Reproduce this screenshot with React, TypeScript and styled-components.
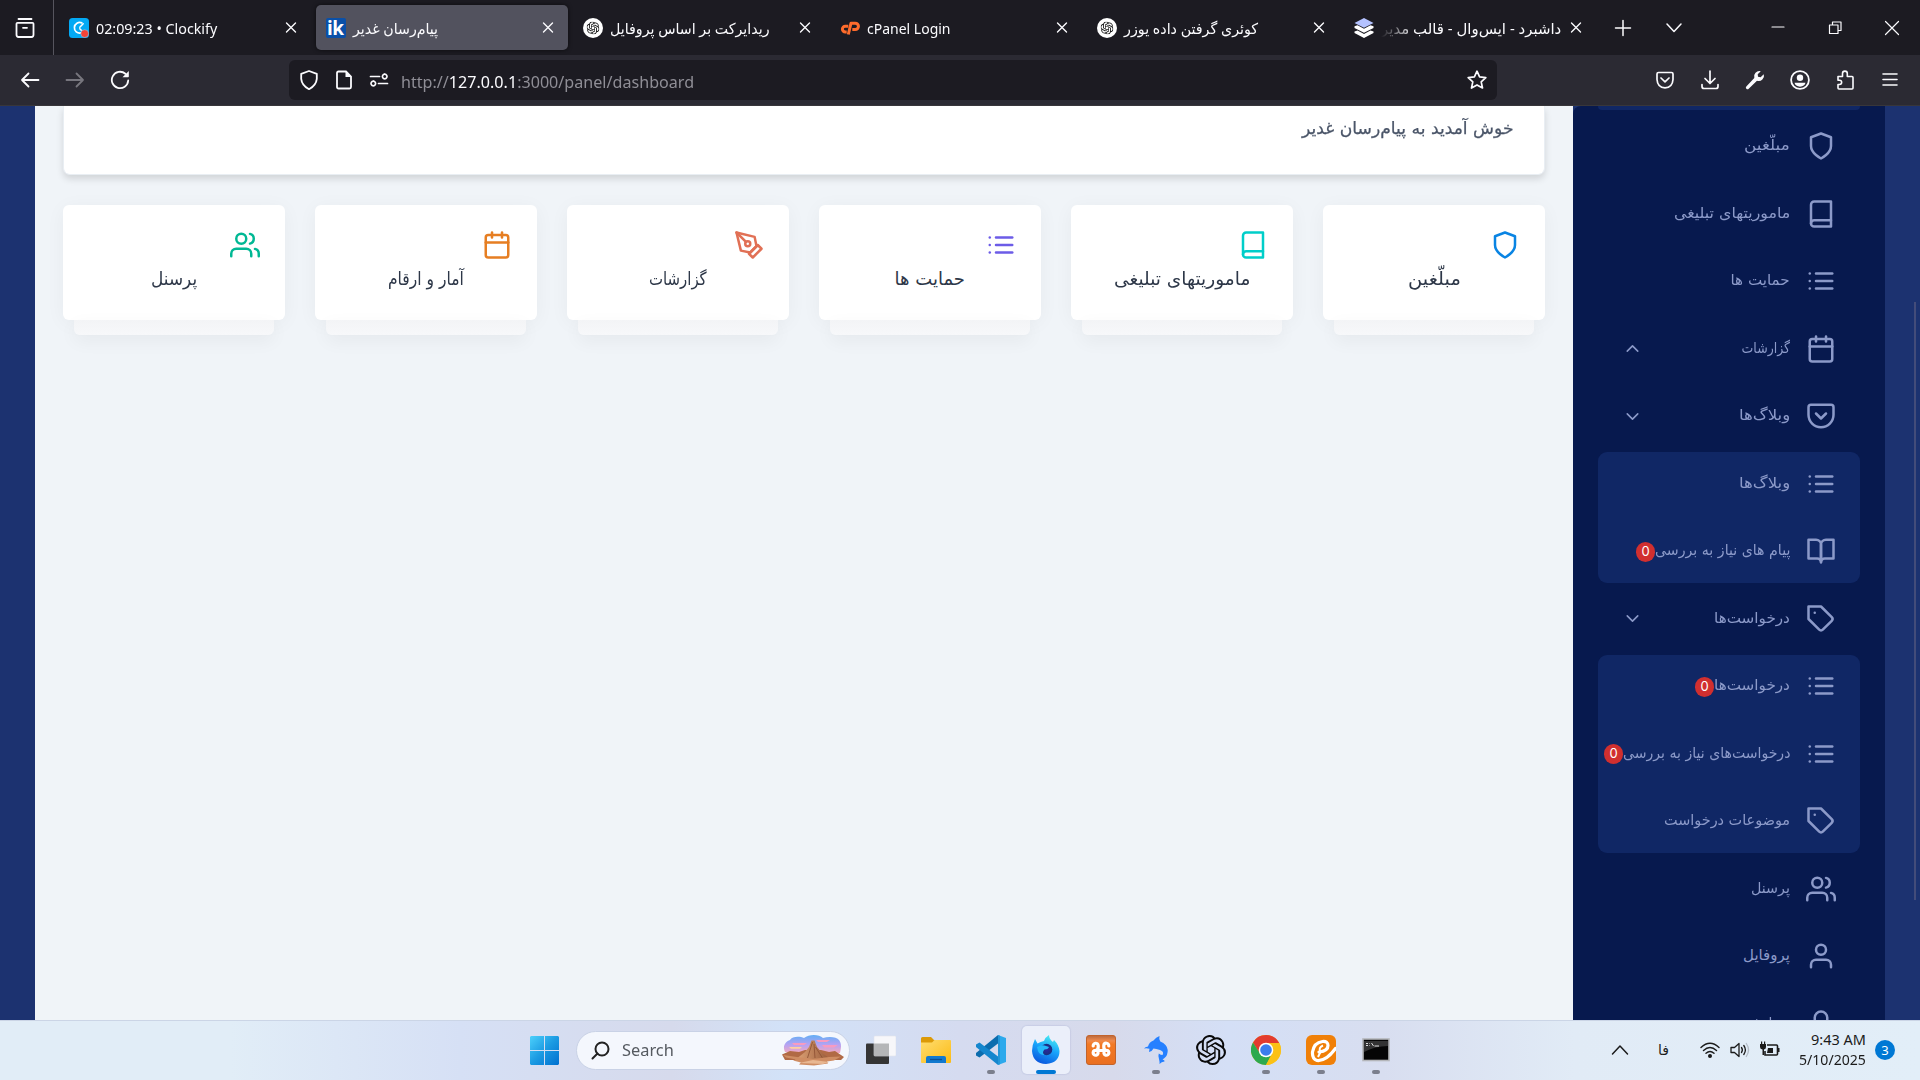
import React, { useLayoutEffect, useRef, useState } from "react";
import styled, { createGlobalStyle, css } from "styled-components";
import {
  FiBook, FiBookOpen, FiCalendar, FiChevronDown, FiChevronUp, FiList, FiLock,
  FiPenTool, FiPocket, FiShield, FiTag, FiUser, FiUsers,
} from "react-icons/fi";
import { SiOpenai } from "react-icons/si";
import type { IconType } from "react-icons";

const Global = createGlobalStyle`
  * { box-sizing: border-box; }
  body { margin: 0; overflow: hidden; background: #1c3270; }
  svg { display: block; flex: none; }
`;

const ui = `"Noto Sans", "Open Sans", "DejaVu Sans", sans-serif`;
const fa = `"DejaVu Sans", sans-serif`;

/* ---------- text held to a column width ---------- */

const FitBox = styled.span<{ $w: number; $rtl?: boolean; $dy?: number }>`
  display: block;
  flex: none;
  width: ${(p) => p.$w}px;
  direction: ${(p) => (p.$rtl ? "rtl" : "ltr")};
  white-space: nowrap;
  margin-top: ${(p) => p.$dy ?? 0}px;
`;
const FitInner = styled.span<{ $rtl?: boolean }>`
  display: inline-block;
  transform-origin: ${(p) => (p.$rtl ? "right" : "left")} center;
`;

function Fit({ w, rtl, dy, children }: { w: number; rtl?: boolean; dy?: number; children: React.ReactNode }) {
  const ref = useRef<HTMLSpanElement>(null);
  const [k, setK] = useState(1);
  useLayoutEffect(() => {
    if (ref.current) setK(w / ref.current.offsetWidth);
  }, [w]);
  return (
    <FitBox $w={w} $rtl={rtl} $dy={dy}>
      <FitInner ref={ref} $rtl={rtl} style={{ transform: `scaleX(${k})` }}>{children}</FitInner>
    </FitBox>
  );
}

/* ---------- browser chrome ---------- */

const Screen = styled.div`
  width: 1920px;
  height: 1080px;
  display: flex;
  flex-direction: column;
  overflow: hidden;
  font-family: ${ui};
`;
const TabBar = styled.div`
  height: 55px;
  flex: none;
  display: flex;
  align-items: center;
  background: #1c1b22;
  color: #fbfbfe;
`;
const ViewButton = styled.div`
  width: 54px;
  height: 55px;
  padding: 1px 0 0 15px;
  display: flex;
  align-items: center;
  border-right: 1px solid #56555e;
`;
const Tab = styled.div<{ $active?: boolean }>`
  width: 252px;
  height: 45px;
  margin-left: 5px;
  padding: 0 10px;
  display: flex;
  align-items: center;
  border-radius: 5px;
  font-size: 15px;
  line-height: 22px;
  ${(p) => p.$active && css`background: #52525e; box-shadow: 0 0 4px rgba(0, 0, 0, 0.6);`}
`;
const Tabs = styled.div`
  display: flex;
  width: 1545px;
`;
const Favicon = styled.div`
  width: 20px;
  height: 20px;
  margin-right: 7px;
  flex: none;
`;
const Faded = styled.div<{ $fade?: boolean }>`
  flex: 1;
  min-width: 0;
  ${(p) => p.$fade && css`mask-image: linear-gradient(to right, transparent, #000 34px);`}
`;
const TabTools = styled.div`
  flex: 1;
  display: flex;
  align-items: center;
  padding: 0 18px 0 14px;
`;
const Gap = styled.div<{ $w: number }>`
  width: ${(p) => p.$w}px;
  flex: none;
`;
const NavBar = styled.div`
  height: 51px;
  flex: none;
  display: flex;
  align-items: center;
  padding: 0 20px;
  background: #2b2a33;
  border-bottom: 1px solid #38363a;
  color: #fbfbfe;
`;
const NavGroup = styled.div`
  width: 269px;
  display: flex;
  gap: 25px;
`;
const UrlBar = styled.div`
  width: 1208px;
  height: 40px;
  display: flex;
  align-items: center;
  padding: 0 10px;
  border-radius: 6px;
  background: #1c1b22;
  font-size: 17px;
  line-height: 24px;
`;
const Url = styled.div`
  color: #8f8e96;
`;
const Host = styled.span`
  color: #fbfbfe;
`;
const Spacer = styled.div`
  flex: 1;
`;
const NavTools = styled.div`
  flex: 1;
  display: flex;
  justify-content: flex-end;
  gap: 25px;
`;

const Line = ({ d, size = 20, sw = 1.6, color = "currentColor", fill = "none" }: { d: string; size?: number; sw?: number; color?: string; fill?: string }) => (
  <svg width={size} height={size} viewBox="0 0 20 20" fill={fill} stroke={color} strokeWidth={sw} strokeLinecap="round" strokeLinejoin="round">
    <path d={d} />
  </svg>
);
const Close = () => <Line d="M5.5 5l9 9M14.5 5l-9 9" size={20} sw={1.4} />;

const GptIcon = () => (
  <Favicon>
    <svg width="20" height="20" viewBox="0 0 20 20">
      <circle cx="10" cy="10" r="10" fill="#fff" />
      <svg x="3.5" y="3.5" width="13" height="13"><SiOpenai size={13} color="#111" /></svg>
    </svg>
  </Favicon>
);
const ClockifyIcon = () => (
  <Favicon>
    <svg width="20" height="20" viewBox="0 0 20 20">
      <rect width="20" height="20" rx="3.5" fill="#03a9f4" />
      <path d="M12.8 4.900A5.300 5.300 0 1 0 12 14.900" fill="none" stroke="#fff" strokeWidth="1.700" strokeLinecap="round" />
      <path d="M10.800 9.200l3.400-3.400M10.800 10.800l2.200 2.200" stroke="#fff" strokeWidth="1.500" strokeLinecap="round" />
      <circle cx="15.700" cy="15.600" r="3.900" fill="#f44336" stroke="#8fc4e8" strokeWidth=".6" />
    </svg>
  </Favicon>
);
const CpanelIcon = () => (
  <Favicon>
    <svg width="20" height="20" viewBox="0 0 20 20" fill="none" stroke="#ff6c2c" strokeWidth="3" strokeLinejoin="round">
      <path d="M8.300 8.200H5.300a2.900 2.900 0 0 0 0 5.800H6.700" />
      <path d="M8.300 16.500l2.700-11.300h4.300a2.900 2.900 0 0 1 0 6.300h-3" />
    </svg>
  </Favicon>
);
const IkBox = styled.div`
  width: 20px;
  height: 20px;
  margin-right: 7px;
  border-radius: 2px;
  background: #0a50a8;
  color: #fff;
  font: 700 19px/21px "Open Sans", sans-serif;
  letter-spacing: -0.5px;
  padding-left: 1px;
  flex: none;
`;
const StackIcon = () => (
  <Favicon>
    <svg width="20" height="20" viewBox="0 0 20 20">
      <path d="M10 0l9.500 4.900-9.500 4.900L.5 4.900z" fill="#b4c2ff" />
      <path d="M.5 8.200l3-.9 6.500 3.400 6.500-3.400 3 .9v1.700L10 14.800.500 9.900z" fill="#fff" />
      <path d="M.5 13.400l3-.9 6.500 3.500 6.500-3.500 3 .9v1.700L10 20 .500 15.100z" fill="#fff" />
    </svg>
  </Favicon>
);

/* ---------- page ---------- */

const Page = styled.div`
  height: 914px;
  flex: none;
  display: flex;
  direction: rtl;
  background: #1c3270;
  overflow: hidden;
`;
const Gutter = styled.div`
  width: 35px;
  flex: none;
  display: flex;
  direction: ltr;
  justify-content: flex-end;
  padding: 196px 4px 0 0;
`;
const Thumb = styled.div`
  width: 2px;
  height: 598px;
  background: #434c7a;
`;
const Side = styled.nav`
  width: 312px;
  flex: none;
  padding: 0 25px;
  display: flex;
  flex-direction: column;
  gap: 4.5px;
  background: #07194e;
  border-top-left-radius: 8px;
  color: #8c9ac9;
`;
const Group = styled.div<{ $stub?: boolean }>`
  display: flex;
  flex-direction: column;
  gap: 4.5px;
  flex: none;
  border-radius: 9px;
  background: #102765;
  ${(p) => p.$stub && css`height: 4px; border-radius: 0 0 9px 9px;`}
`;
const Row = styled.div`
  height: 63px;
  flex: none;
  display: flex;
  align-items: center;
  padding: 0 24px 0 17px;
  font-family: ${fa};
  font-size: 15px;
  line-height: 22px;
`;
const RowText = styled.div`
  flex: 1;
  display: flex;
  align-items: center;
  margin-right: 16px;
`;
const Badge = styled.span`
  width: 19px;
  height: 20px;
  flex: none;
  margin-top: 1px;
  border-radius: 10px;
  background: #d12f2f;
  color: #fff;
  font: 13px/18px Inter, sans-serif;
  text-align: center;
`;
const ChevronWrap = styled.div`
  width: 20px;
  margin-left: 8px;
  svg { stroke-width: 1.8; }
`;
const Content = styled.main`
  width: 1538px;
  flex: none;
  padding: 0 28px;
  background: #f0f4f8;
`;
const Welcome = styled.section`
  height: 69px;
  padding: 10px 30px 0;
  border: 1px solid #e9eef3;
  border-top: 0;
  border-radius: 0 0 7px 7px;
  background: #fff;
  box-shadow: 0 4px 7px rgba(0, 0, 0, 0.13);
  font-family: ${fa};
  font-size: 17px;
  line-height: 24px;
  color: #4a5568;
  -webkit-text-stroke: 0.25px #4a5568;
`;
const Cards = styled.div`
  display: grid;
  grid-template-columns: repeat(6, 222px);
  gap: 30px;
  margin-top: 30px;
`;
const CardCell = styled.div`
  display: flex;
  flex-direction: column;
  align-items: center;
`;
const Card = styled.article`
  width: 222px;
  height: 115px;
  padding: 25px;
  display: flex;
  flex-direction: column;
  border-radius: 6px;
  background: #fff;
  box-shadow: 0 3px 20px rgba(0, 0, 0, 0.045);
`;
const CardTitle = styled.div`
  display: flex;
  justify-content: center;
  margin-top: 7px;
  font-family: ${fa};
  font-size: 18px;
  line-height: 24px;
  color: #2d3748;
`;
const Plate = styled.div`
  width: 200px;
  height: 15px;
  border-radius: 0 0 6px 6px;
  background: linear-gradient(#f3f4f6, #f7f8fa);
  box-shadow: 0 6px 18px rgba(0, 0, 0, 0.05);
`;

/* ---------- taskbar ---------- */

const TaskBar = styled.div`
  height: 60px;
  flex: none;
  display: flex;
  align-items: center;
  padding-bottom: 1px;
  border-top: 1px solid #cbd5e6;
  background: linear-gradient(90deg, #e1edf7 0, #e1edf7 12%, #d6e0f5 24%, #d6daec 35%, #d2e2f8 41%, #d5dbf0 50%, #d7daeb 58%, #d4dff6 64%, #d8def0 72%, #e1ebf6 82%, #e2eef8 100%);
`;
const StartSlot = styled.div`
  width: 576px;
  flex: none;
  padding-left: 530px;
`;
const Search = styled.div`
  width: 274px;
  height: 39px;
  flex: none;
  display: flex;
  align-items: center;
  padding: 0 5px 0 14px;
  border: 1px solid #c9d2e6;
  border-radius: 20px;
  background: #f4f7fd;
  color: #555a60;
  font-size: 17px;
  line-height: 24px;
`;
const Apps = styled.div`
  display: flex;
  padding-left: 3px;
`;
const AppButton = styled.div<{ $active?: boolean }>`
  width: 48px;
  height: 48px;
  margin: 0 3.5px;
  display: flex;
  flex-direction: column;
  align-items: center;
  padding-top: 9px;
  border-radius: 5px;
  ${(p) => p.$active && css`background: #ebeffa; box-shadow: 0 0 1px 1px rgba(150, 160, 200, 0.2);`}
`;
const Mark = styled.div<{ $active?: boolean }>`
  width: ${(p) => (p.$active ? 20 : 8)}px;
  height: 4px;
  margin-top: 5px;
  border-radius: 2px;
  background: ${(p) => (p.$active ? "#0078d4" : "#7b7f8d")};
`;
const Tray = styled.div`
  width: 320px;
  margin-left: auto;
  display: flex;
  align-items: center;
  padding: 0 25px 0 10px;
  color: #1b1b1b;
`;
const Lang = styled.div`
  width: 12px;
  font: 14px/20px ${fa};
  direction: rtl;
`;
const Clock = styled.div`
  width: 67px;
  display: flex;
  flex-direction: column;
  align-items: flex-end;
  padding-bottom: 2px;
  font-size: 14.5px;
  line-height: 20px;
`;
const Count = styled.div`
  width: 20px;
  height: 20px;
  border-radius: 50%;
  background: #0078d4;
  color: #fff;
  font-size: 13px;
  line-height: 20px;
  text-align: center;
`;

const WinLogo = () => (
  <svg width="29" height="29" viewBox="0 0 29 29">
    <defs>
      <linearGradient id="win" gradientUnits="userSpaceOnUse" x1="0" y1="0" x2="29" y2="29">
        <stop offset="0" stopColor="#4cd0fb" /><stop offset=".5" stopColor="#1b9ae2" /><stop offset="1" stopColor="#0070d0" />
      </linearGradient>
    </defs>
    <path fill="url(#win)" d="M1 0h13v14H0V1zM15 0h13l1 1v13H15zM0 15h14v14H1l-1-1zM15 15h14v13l-1 1H15z" />
  </svg>
);
const Desert = () => (
  <svg width="62" height="31" viewBox="0 0 62 31">
    <defs>
      <linearGradient id="sky" x1="0" y1="0" x2="0" y2="1"><stop offset="0" stopColor="#62aef5" /><stop offset=".55" stopColor="#b7a2f2" /><stop offset="1" stopColor="#f4a9bd" /></linearGradient>
      <linearGradient id="hill" x1="0" y1="0" x2="1" y2="0"><stop offset="0" stopColor="#e0a578" /><stop offset="1" stopColor="#935535" /></linearGradient>
    </defs>
    <path d="M3 17C0 11 4 6 8 5c2-4 10-4 14-2 5-4 15-4 19 0 6-2 14-1 16 2 3 4 2 8 1 13z" fill="url(#sky)" />
    <path d="M10 8h15l-3 2H12zM34 5h14l-3 2h-9zM40 10h16l-4 2.500H42z" fill="#f79bc0" />
    <path d="M7 12h13l-2 1.800H9z" fill="#ffd0a0" />
    <path d="M0 19.500l8-3.500 9 1 6-2h16l8 2 6-1 9 6-3 3H3z" fill="#b16a45" />
    <path d="M13 25l10-8 4-5 2.500-6.500h3L35 12l5 6 10 7z" fill="url(#hill)" />
    <path d="M30.500 7l-5 16M32 9l1 14M33.500 12l7 11" stroke="#8b4e31" strokeWidth=".8" fill="none" />
    <path d="M1 20l14 2 16 2 16-2 12-.5-7 4-7 1 1 2-14 2-15-1 2-2-8-2 3-1-10-2z" fill="#cf8d63" />
    <path d="M17 28l14-3 16 2-6 2z" fill="#e8b791" />
  </svg>
);
const TaskView = () => (
  <svg width="30" height="30" viewBox="0 0 30 30">
    <rect x="0" y="8.500" width="23" height="20.500" rx="1" fill="#353535" />
    <rect x="8" y="1" width="22" height="20" rx="1" fill="#f7f7fa" stroke="#e2e4ec" strokeWidth=".6" />
    <path d="M8 8.500h15V21H8z" fill="#b5b6b8" />
  </svg>
);
const Folder = () => (
  <svg width="30" height="30" viewBox="0 0 30 30">
    <defs><linearGradient id="fold" x1="0" y1="0" x2="1" y2="1"><stop offset="0" stopColor="#ffdd70" /><stop offset="1" stopColor="#fbbb15" /></linearGradient></defs>
    <path d="M0 3.500q0-1.500 1.500-1.500H10L13 5H29v4H0z" fill="#dc9a08" />
    <path d="M0 7.500h11L13.500 5H29q1 0 1 1v21q0 1-1 1H1q-1 0-1-1z" fill="url(#fold)" />
    <path d="M5 28v-5q0-2 2-2h16q2 0 2 2v5z" fill="#1179cf" />
    <path d="M9 24.500h12" stroke="#0b4f94" strokeWidth="1.300" />
  </svg>
);
const VsCode = () => (
  <svg width="30" height="30" viewBox="0 0 30 30">
    <path d="M22 0l8 3v24l-8 3z" fill="#2da9ec" />
    <path d="M22 0v8.500L3.500 22.500 0 20.500v-2.500z" fill="#0b6cae" />
    <path d="M22 30v-8.500L3.500 7.500 0 9.500v2.500z" fill="#1486ce" />
    <path d="M22 0l2 .7V29.300l-2 .7z" fill="#2397d8" />
  </svg>
);
const Firefox = () => (
  <svg width="30" height="30" viewBox="0 0 30 30">
    <defs>
      <linearGradient id="fox" x1=".7" y1="0" x2=".3" y2="1"><stop offset="0" stopColor="#4df0f0" /><stop offset=".45" stopColor="#19a5fb" /><stop offset="1" stopColor="#0a55dd" /></linearGradient>
      <radialGradient id="core"><stop offset="0" stopColor="#2b2aa0" /><stop offset="1" stopColor="#19307e" /></radialGradient>
    </defs>
    <path d="M4 4l2.500 4.500q3-2 6.500-2.500Q14.500 2 18 0q0 4 4 7l1-2q5 5 5.500 11Q28.500 28 15 29 2 28.500 1 16q0-6 3-12z" fill="url(#fox)" />
    <circle cx="15.500" cy="14.500" r="5.800" fill="url(#core)" />
    <path d="M6 12q5-3 9-1l3 1q-1 2.500-4.500 2.500-3 3 0 5.500-5 0-6.500-4z" fill="#24b9fb" />
  </svg>
);
const Xampp = () => (
  <svg width="30" height="30" viewBox="0 0 30 30">
    <defs><linearGradient id="xa" x1="0" y1="0" x2="0" y2="1"><stop offset="0" stopColor="#b9683c" /><stop offset=".18" stopColor="#f08a4b" /><stop offset=".3" stopColor="#f37a25" /><stop offset="1" stopColor="#ea6f20" /></linearGradient></defs>
    <rect x=".5" y=".5" width="29" height="29" rx="2.500" fill="url(#xa)" stroke="#c2632b" />
    <path d="M11.500 15.500h7M7.200 11a2.500 2.500 0 0 1 5-.5v1.500a3.500 3.500 0 0 1-2.500 3.500H8.500a2.500 2.500 0 1 0 3.500 3v-1M22.800 11a2.500 2.500 0 0 0-5-.5v1.500a3.500 3.500 0 0 0 2.500 3.500H21.500a2.500 2.500 0 1 1-3.500 3v-1" fill="none" stroke="#fff" strokeWidth="3.200" strokeLinecap="round" strokeLinejoin="round" />
  </svg>
);
const Dolphin = () => (
  <svg width="30" height="30" viewBox="0 0 30 30">
    <path d="M3 13.500q1-1.500 4-2Q8 7 12.500 5.500 15 2 18.500 1q-.8 3 .8 5.500Q26 9 26.700 15q.3 5-3.200 8l-2 1.500q2.500.5 2 2-3 .3-5 2.500.2-2.500-.5-5-1.200-2.500-.2-5.500 2 1.500 3.700 1.500 2-3.500-2.500-5-4-1.500-6.500-1.500-1.500 3-4.500 3.500l.5-3.300Q5.500 13 3 13.500z" fill="#2680ff" />
  </svg>
);
const Chrome = () => (
  <svg width="30" height="30" viewBox="0 0 30 30">
    <circle cx="15" cy="15" r="15" fill="#fbc116" />
    <path d="M15 8h13.200A15 15 0 0 0 2 7.500L9 19z" fill="#e33b2e" />
    <path d="M2 7.500A15 15 0 0 0 15 30l6-11.500H9z" fill="#2da94f" />
    <path d="M28.300 8H15l6 11-6 11A15 15 0 0 0 28.300 8z" fill="#fbc116" />
    <circle cx="15" cy="15" r="7.300" fill="#fff" />
    <circle cx="15" cy="15" r="5.800" fill="#3b7ded" />
  </svg>
);
const Eitaa = () => (
  <svg width="30" height="30" viewBox="0 0 30 30">
    <rect width="30" height="30" rx="6" fill="#f08008" />
    <path d="M13 17q9-1 9-6.500 0-4.500-5.500-4Q8 7.500 6.500 17 6 24 11 25.500q9 1 18.500-12" fill="none" stroke="#fff" strokeWidth="3.200" strokeLinecap="round" />
    <path d="M17 10.500q-5 2-2.500 6.500l-2.500 5" fill="none" stroke="#fff" strokeWidth="2" />
  </svg>
);
const Terminal = () => (
  <svg width="30" height="30" viewBox="0 0 30 30">
    <rect x="2" y="4" width="26" height="21.500" fill="#050505" stroke="#b4b6ba" strokeWidth="1.600" />
    <path d="M3 6h24v5Q14 11 3 17z" fill="#333" />
    <path d="M5 8.500h2M5 10.500h2M8.500 8.500v.5M8.500 10.500v.5M10.500 8l2 3M13.500 11h4.500" stroke="#ddd" strokeWidth="1" />
  </svg>
);

/* ---------- data ---------- */

type Item = { icon: IconType; text: string; w: number; badge?: boolean; open?: boolean };
const first: Item[] = [
  { icon: FiShield, text: "مبلّغین", w: 46 },
  { icon: FiBook, text: "ماموریتهای تبلیغی", w: 116 },
  { icon: FiList, text: "حمایت ها", w: 59.5 },
  { icon: FiCalendar, text: "گزارشات", w: 48.5, open: false },
  { icon: FiPocket, text: "وبلاگ‌ها", w: 51, open: true },
];
const blogs: Item[] = [
  { icon: FiList, text: "وبلاگ‌ها", w: 51 },
  { icon: FiBookOpen, text: "پیام های نیاز به بررسی", w: 135, badge: true },
];
const requests: Item[] = [
  { icon: FiList, text: "درخواست‌ها", w: 76, badge: true },
  { icon: FiList, text: "درخواست‌های نیاز به بررسی", w: 167, badge: true },
  { icon: FiTag, text: "موضوعات درخواست", w: 126 },
];
const last: Item[] = [
  { icon: FiUsers, text: "پرسنل", w: 39 },
  { icon: FiUser, text: "پروفایل", w: 47 },
  { icon: FiLock, text: "ویرایش رمز", w: 69 },
];
const cards = [
  { icon: FiShield, text: "مبلّغین", w: 53, color: "#0984e3" },
  { icon: FiBook, text: "ماموریتهای تبلیغی", w: 136, color: "#00cec9" },
  { icon: FiList, text: "حمایت ها", w: 70, color: "#6c5ce7" },
  { icon: FiPenTool, text: "گزارشات", w: 58, color: "#e17055" },
  { icon: FiCalendar, text: "آمار و ارقام", w: 76, color: "#e67e22" },
  { icon: FiUsers, text: "پرسنل", w: 46, color: "#00b894" },
];

const MenuRow = ({ item }: { item: Item }) => (
  <Row>
    <item.icon size={30} />
    <RowText>
      <Fit w={item.w} rtl dy={-2}>{item.text}</Fit>
      {item.badge && <Badge>0</Badge>}
    </RowText>
    {item.open !== undefined && <ChevronWrap>{item.open ? <FiChevronDown size={21} /> : <FiChevronUp size={21} />}</ChevronWrap>}
  </Row>
);

export default function App() {
  return (
    <Screen>
      <Global />
      <TabBar>
        <ViewButton>
          <Line d="M3.500 1h13M1.500 5.800q0-1 1-1h15q1 0 1 1v11q0 2.200-2 2.200h-13q-2 0-2-2.200zM8 9.800h4" sw={1.800} />
        </ViewButton>
        <Tabs>
          <Tab>
            <ClockifyIcon /><Faded><Fit w={121}>02:09:23 • Clockify</Fit></Faded><Close />
          </Tab>
          <Tab $active>
            <IkBox>ik</IkBox><Faded><Fit w={85} rtl>پیام‌رسان غدیر</Fit></Faded><Close />
          </Tab>
          <Tab>
            <GptIcon /><Faded><Fit w={160} rtl>ریدایرکت بر اساس پروفایل</Fit></Faded><Close />
          </Tab>
          <Tab>
            <CpanelIcon /><Faded><Fit w={84}>cPanel Login</Fit></Faded><Close />
          </Tab>
          <Tab>
            <GptIcon /><Faded><Fit w={134} rtl>کوئری گرفتن داده یوزر</Fit></Faded><Close />
          </Tab>
          <Tab>
            <StackIcon /><Faded $fade><Fit w={180} rtl>داشبرد - ایس‌وال - قالب مدیر</Fit></Faded><Close />
          </Tab>
        </Tabs>
        <TabTools>
          <Line d="M10 2.500v15M2.500 10h15" sw={1.5} />
          <Gap $w={31} />
          <Line d="M3 6l7 7.500L17 6" sw={1.5} />
          <Spacer />
          <Line d="M4 9h12" sw={1.2} />
          <Gap $w={37} />
          <Line d="M4.500 7h8.500v8.500H4.500zM7.500 7V4H16v8.500h-3" sw={1.2} />
          <Gap $w={37} />
          <Line d="M3.500 3.500l13 13M16.500 3.500l-13 13" sw={1.2} />
        </TabTools>
      </TabBar>
      <NavBar>
        <NavGroup>
          <Line d="M18.500 10H2M8.500 3.500L2 10l6.500 6.500" sw={1.8} />
          <Line d="M1.500 10H18M11.500 3.500L18 10l-6.500 6.500" sw={1.8} color="#77767e" />
          <svg width="20" height="20" viewBox="0 0 20 20">
            <path d="M18.200 10.500a8.200 8.200 0 1 1-2.800-6.700" fill="none" stroke="#fbfbfe" strokeWidth="1.800" strokeLinecap="round" />
            <path d="M18.800 1v5.600q0 .7-.7.700h-5.600z" fill="#fbfbfe" />
          </svg>
        </NavGroup>
        <UrlBar>
          <Line d="M10 1l7.800 2.800v5q-.6 6.500-7.800 10.400Q2.800 15.300 2.200 8.800v-5z" sw={1.8} />
          <Gap $w={15} />
          <svg width="20" height="20" viewBox="0 0 20 20">
            <path d="M4.500 1.500h7.500l5 5v10.500q0 1.500-1.500 1.500h-11Q3 18.500 3 17V3q0-1.500 1.500-1.500z" fill="none" stroke="#fbfbfe" strokeWidth="1.800" />
            <path d="M11.500 1.500v5.500h5.500z" fill="#fbfbfe" />
          </svg>
          <Gap $w={15} />
          <Line d="M1.500 6.500h9M9.500 13.500h9M15.700 4.200a2.300 2.300 0 1 0 .01 0M4.300 11.200a2.300 2.300 0 1 0 .01 0" sw={1.700} />
          <Gap $w={12} />
          <Url><Fit w={293} dy={3}>http://<Host>127.0.0.1</Host>:3000/panel/dashboard</Fit></Url>
          <Spacer />
          <Line d="M10 1.200l2.600 5.700 6.200.7-4.600 4.200 1.300 6.200L10 14.900 4.500 18l1.300-6.200L1.200 7.600l6.200-.7z" sw={1.700} />
        </UrlBar>
        <NavTools>
          <Line d="M3.500 2.500h13q1.500 0 1.500 1.500v5.500q-.5 8-8 8.300-7.500-.3-8-8.300V4q0-1.500 1.500-1.500zM6 8l4 3.800L14 8" sw={1.700} />
          <Line d="M10 1v12M5 8.500l5 5 5-5M2 14.500v2q0 2 2 2h12q2 0 2-2v-2" sw={1.700} />
          <svg width="20" height="20" viewBox="0 0 20 20">
            <path d="M15.800 1.300A5.300 5.300 0 0 0 9.300 8L1.300 16.400a1.700 1.700 0 0 0 2.400 2.400L12 10.700a5.300 5.300 0 0 0 6.800-6.500L15.600 7.200 13 6.800l-.3-2.600z" fill="#fbfbfe" />
          </svg>
          <svg width="20" height="20" viewBox="0 0 20 20">
            <circle cx="10" cy="10" r="8.900" fill="none" stroke="#fbfbfe" strokeWidth="1.800" />
            <circle cx="10" cy="7.700" r="3.200" fill="#fbfbfe" />
            <path d="M4.500 12.800h11q-1 3.700-5.500 3.900-4.500-.2-5.500-3.900z" fill="#fbfbfe" />
          </svg>
          <Line d="M3 6.500h4.500V3.500a2.400 2.400 0 0 1 4.800 0v3H17q1 0 1 1V18q0 1-1 1H4q-1 0-1-1v-3.500h1.500a2 2 0 0 0 0-4.300H3z" sw={1.600} />
          <Line d="M3 4h14M3 9.500h14M3 15h14" sw={1.600} />
        </NavTools>
      </NavBar>

      <Page>
        <Gutter><Thumb /></Gutter>
        <Side>
          <Group $stub />
          {first.map((i, n) => <MenuRow key={n} item={i} />)}
          <Group>{blogs.map((i, n) => <MenuRow key={n} item={i} />)}</Group>
          <MenuRow item={{ icon: FiTag, text: "درخواست‌ها", w: 76, open: true }} />
          <Group>{requests.map((i, n) => <MenuRow key={n} item={i} />)}</Group>
          {last.map((i, n) => <MenuRow key={n} item={i} />)}
        </Side>
        <Content>
          <Welcome><Fit w={212} rtl>خوش آمدید به پیام‌رسان غدیر</Fit></Welcome>
          <Cards>
            {cards.map((c) => (
              <CardCell key={c.color}>
                <Card>
                  <c.icon size={30} color={c.color} />
                  <CardTitle><Fit w={c.w} rtl>{c.text}</Fit></CardTitle>
                </Card>
                <Plate />
              </CardCell>
            ))}
          </Cards>
        </Content>
      </Page>

      <TaskBar>
        <StartSlot><WinLogo /></StartSlot>
        <Search>
          <svg width="19" height="19" viewBox="0 0 19 19" fill="none" stroke="#222" strokeWidth="2" strokeLinecap="round">
            <circle cx="11" cy="8" r="6.500" /><path d="M6.500 12.500L1.500 17.500" />
          </svg>
          <Gap $w={12} />
          <Fit w={52}>Search</Fit>
          <Spacer />
          <Desert />
        </Search>
        <Apps>
          <AppButton><TaskView /></AppButton>
          <AppButton><Folder /></AppButton>
          <AppButton><VsCode /><Mark /></AppButton>
          <AppButton $active><Firefox /><Mark $active /></AppButton>
          <AppButton><Xampp /></AppButton>
          <AppButton><Dolphin /><Mark /></AppButton>
          <AppButton><SiOpenai size={30} color="#0a0a0a" /></AppButton>
          <AppButton><Chrome /><Mark /></AppButton>
          <AppButton><Eitaa /><Mark /></AppButton>
          <AppButton><Terminal /><Mark /></AppButton>
        </Apps>
        <Tray>
          <Line d="M2.500 14L10 6l7.500 8" sw={1.500} />
          <Gap $w={27} />
          <Lang>فا</Lang>
          <Gap $w={31} />
          <svg width="20" height="20" viewBox="0 0 20 20" fill="none" stroke="#1b1b1b" strokeWidth="1.400" strokeLinecap="round">
            <path d="M1 7.500q9-8.500 18 0M3.500 10.500q6.500-6 13 0M6 13.200q4-3.600 8 0" /><circle cx="10" cy="16" r="1.300" fill="#1b1b1b" />
          </svg>
          <Gap $w={10} />
          <svg width="20" height="20" viewBox="0 0 20 20" fill="none" stroke="#1b1b1b" strokeWidth="1.300" strokeLinecap="round" strokeLinejoin="round">
            <path d="M1 7.500h3.500L9 3.500v13L4.500 12.500H1zM11.500 7.500q1.800 2.500 0 5M13.800 5.500q3.200 4.500 0 9" /><path d="M16.300 3.500q4.500 6.500 0 13" stroke="#b4bcc6" />
          </svg>
          <Gap $w={10} />
          <svg width="20" height="20" viewBox="0 0 20 20">
            <path d="M7 5h9.500q1 0 1 1v8q0 1-1 1H5v-4" fill="none" stroke="#1b1b1b" strokeWidth="1.600" />
            <path d="M8 8h5v5H7zM18 8h1.500v4H18zM0 4h6v3q0 2-2 2.500V15H2.500V9.500Q0 9 0 7zM1 1.500h1.200V4H1zM4 1.500h1.200V4H4z" fill="#1b1b1b" />
          </svg>
          <Spacer />
          <Clock><Fit w={55}>9:43 AM</Fit><Fit w={67}>5/10/2025</Fit></Clock>
          <Gap $w={9} />
          <Count>3</Count>
        </Tray>
      </TaskBar>
    </Screen>
  );
}
